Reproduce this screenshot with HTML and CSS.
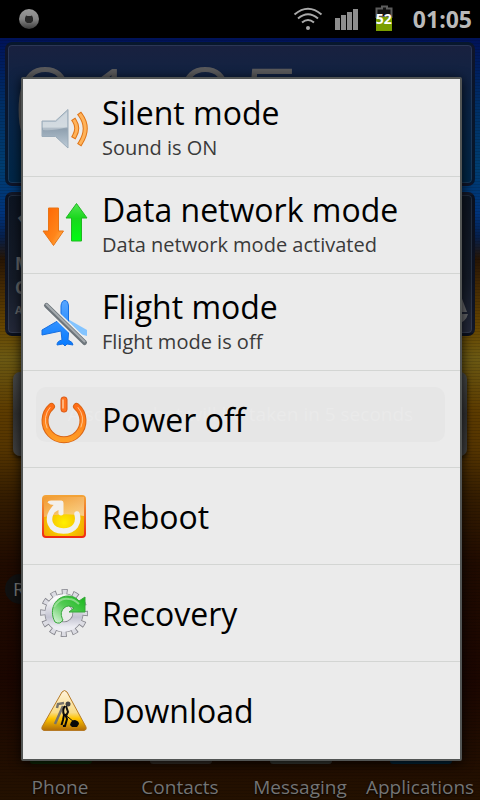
FILE: index.html
```html
<!DOCTYPE html>
<html lang="en">
<head>
<meta charset="utf-8">
<title>Power menu</title>
<link rel="stylesheet" href="styles.css">
</head>
<body>
<div class="phone">
  <header class="status">
    <svg class="status-note" width="22" height="22" viewBox="0 0 22 22" aria-hidden="true">
      <defs><linearGradient id="ball" x1="0" y1="0" x2="0" y2="1"><stop offset="0" stop-color="#999"/><stop offset=".5" stop-color="#858585"/><stop offset="1" stop-color="#3c3c3c"/></linearGradient></defs>
      <circle cx="11" cy="11" r="10" fill="url(#ball)"/>
      <path d="M8 7.500l1.500 .5h3l1.500-.5 1 2.500v3l-2 2H9l-2-2v-3z" fill="#292929"/>
    </svg>
    <div class="status-icons">
      <svg width="30" height="26" viewBox="0 0 30 26" fill="none" stroke="#aaa" stroke-width="2" aria-hidden="true">
        <path d="M1.500 8.500Q15-3 28.500 8.500M5 12.500Q15 4 25 12.500M9 16.500Q15 11.500 21 16.500"/><circle cx="15" cy="22" r="2" fill="#aaa" stroke="none"/>
      </svg>
      <svg class="signal" width="24" height="22" viewBox="0 0 24 22" fill="#8e8e8e" aria-hidden="true"><rect y="10" width="5" height="12"/><rect x="6" y="7" width="5" height="15"/><rect x="12" y="4" width="5" height="18"/><rect x="18" y="1" width="5" height="21"/></svg>
      <div class="battery">
        <svg width="18" height="26" viewBox="0 0 18 26" aria-hidden="true"><path d="M7 1.500h5v2h4.500V12H1.500V3.500H7z" fill="#111" stroke="#5c5c5c" stroke-width="2"/><path d="M1 12h16v14H1z" fill="#7a9e00"/></svg>
        <span class="battery-level">52</span>
      </div>
      <time class="clock">01:05</time>
    </div>
  </header>
  <main class="home">
    <section class="widget widget-clock"><span class="digits">01:05</span></section>
    <section class="widget widget-weather"><span class="big">12</span><span>Mon</span><span>Clear</span><span class="small">AccuWeather</span>
      <svg class="sun" width="28" height="32" viewBox="0 0 28 32" aria-hidden="true"><path d="M26 18L20 2V18zM27 20H16v10q9-2 11-10z" fill="#66686b"/></svg>
    </section>
    <div class="search"></div>
    <div class="label">Reader</div>
    <nav class="dock">
      <a href="#phone" class="app app-phone">Phone</a>
      <a href="#contacts" class="app app-contacts">Contacts</a>
      <a href="#messaging" class="app app-messaging">Messaging</a>
      <a href="#applications" class="app app-applications">Applications</a>
    </nav>
  </main>
  <div class="dialog" role="dialog" aria-label="Phone options">
    <button class="row">
      <svg class="icon" width="54" height="54" viewBox="0 0 54 54" aria-hidden="true">
        <defs><linearGradient id="steel" x1="0" y1="0" x2="0" y2="1"><stop offset="0" stop-color="#b8c5cf"/><stop offset=".45" stop-color="#c3ced6"/><stop offset=".5" stop-color="#8fa0af"/><stop offset="1" stop-color="#bdcbd7"/></linearGradient>
        <linearGradient id="orange" x1="0" y1="0" x2="0" y2="1"><stop offset="0" stop-color="#ff6d16"/><stop offset="1" stop-color="#ff9e27"/></linearGradient></defs>
        <path d="M5 19h13.500L31 7.500V46L18.500 34.500H5z" fill="url(#steel)" stroke="#9aabb9"/>
        <path d="M6 20h13L30 10V25Q17 29 6 28z" fill="#fff" opacity=".28"/>
        <g fill="none" stroke-linecap="square"><path d="M37.500 19Q42 26 37.500 34M43.500 13Q53 26 43.500 41" stroke="#df7518" stroke-width="5"/><path d="M37.500 19Q42 26 37.500 34M43.500 13Q53 26 43.500 41" stroke="#ffb35a" stroke-width="3"/></g>
      </svg>
      <span class="text"><span class="title">Silent mode</span><span class="sub">Sound is ON</span></span>
    </button>
    <button class="row">
      <svg class="icon" width="54" height="54" viewBox="0 0 54 54" aria-hidden="true">
        <defs><linearGradient id="down" x1="0" y1="0" x2="1" y2="1"><stop offset="0" stop-color="#ff6200"/><stop offset=".65" stop-color="#ff8519"/><stop offset="1" stop-color="#ffc060"/></linearGradient>
        <linearGradient id="up" x1="0" y1="0" x2="0" y2="1"><stop offset="0" stop-color="#52e652"/><stop offset=".4" stop-color="#19d71c"/><stop offset="1" stop-color="#00fc12"/></linearGradient></defs>
        <path d="M11.500 9h10v23h5L16.500 46.500 6 32h5.500z" fill="url(#down)" stroke="#e87515"/>
        <path d="M39.500 4.500L50 19h-5.500v23h-10V19H29z" fill="url(#up)" stroke="#20b722"/>
      </svg>
      <span class="text"><span class="title">Data network mode</span><span class="sub">Data network mode activated</span></span>
    </button>
    <button class="row">
      <svg class="icon" width="54" height="54" viewBox="0 0 54 54" aria-hidden="true">
        <defs><linearGradient id="sky" x1="0" y1="0" x2="0" y2="1"><stop offset="0" stop-color="#58a6ff"/><stop offset="1" stop-color="#067aff"/></linearGradient></defs>
        <path d="M29 22L50 34v6L29 34z" fill="#83c4ff"/>
        <path d="M28 4.500Q31 4.500 31.500 10V24l.5 7-1 13q5 2 5 5l-6-1-2 2-2-2-6 1q0-4 5-5L24 35 5 39v-5l19-11V10q.5-5.500 4-5.500z" fill="url(#sky)" stroke="#176fe0"/>
        <path d="M9.500 9.500L47.500 46.500" stroke="#f0f0f0" stroke-width="8"/>
        <path d="M9.500 9.500L47.500 46.500" stroke="#6d757b" stroke-width="5" stroke-linecap="round"/><path d="M9.500 8.500L47.500 45.500" stroke="#a5abaf" stroke-width="2" stroke-linecap="round"/>
      </svg>
      <span class="text"><span class="title">Flight mode</span><span class="sub">Flight mode is off</span></span>
    </button>
    <button class="row">
      <svg class="icon" width="54" height="54" viewBox="0 0 54 54" aria-hidden="true">
        <g fill="none" stroke-linecap="round"><path d="M14.500 13.500A19 19 0 1 0 39.500 13.500" stroke="#d96516" stroke-width="7"/><path d="M14.500 13.500A19 19 0 1 0 39.500 13.500" stroke="url(#orange)" stroke-width="5"/><path d="M13 14.500A19 19 0 0 0 10 35M41 14.500A19 19 0 0 1 44 34" stroke="#ffc58d"/></g>
        <rect x="24" y="4" width="6" height="15" rx="2.500" fill="#ff7421" stroke="#d95612"/><path d="M26 6.500v9" stroke="#ffb37b" stroke-width="2"/>
      </svg>
      <span class="text"><span class="title">Power off</span></span>
    </button>
    <button class="row">
      <svg class="icon" width="54" height="54" viewBox="0 0 54 54" aria-hidden="true">
        <defs><radialGradient id="box" cx=".5" cy=".65" r=".6"><stop offset="0" stop-color="#fff000"/><stop offset="1" stop-color="#f0a000"/></radialGradient><linearGradient id="gloss" x1="0" y1="0" x2="1" y2="1"><stop offset="0" stop-color="#f29a3c"/><stop offset="1" stop-color="#fbd9b0"/></linearGradient><linearGradient id="rim" x1="0" y1="0" x2="0" y2="1"><stop offset="0" stop-color="#f3a337"/><stop offset="1" stop-color="#f02b12"/></linearGradient></defs>
        <rect x="6" y="6" width="42" height="41" rx="3" fill="url(#box)" stroke="url(#rim)" stroke-width="2"/>
        <path d="M7 7h40v19Q27 22 7 27z" fill="url(#gloss)" opacity=".8"/>
        <path d="M17.500 18C8 29 13 41 26.500 41C38 41 42.500 33 40 24" fill="none" stroke="#f0f0f0" stroke-width="5.500" stroke-linecap="round"/>
        <path d="M10.500 12.500Q11 10.500 14 10.500H24.500q2 0 2 2.500V24q-2.500 3-5 0v-4L18 22l-4-3 3-4-3.500-.5z" fill="#f3f0eb"/>
      </svg>
      <span class="text"><span class="title">Reboot</span></span>
    </button>
    <button class="row">
      <svg class="icon" width="54" height="54" viewBox="0 0 54 54" aria-hidden="true">
        <defs><linearGradient id="cog" x1="0" y1="0" x2="0" y2="1"><stop offset="0" stop-color="#fafafa"/><stop offset=".65" stop-color="#c4c4d2"/><stop offset="1" stop-color="#ececf2"/></linearGradient><linearGradient id="leaf" x1="1" y1="0" x2="0" y2="1"><stop offset="0" stop-color="#15b719"/><stop offset=".5" stop-color="#53ca54"/><stop offset="1" stop-color="#e6f8e6"/></linearGradient></defs>
        <circle cx="27" cy="26" r="20" fill="none" stroke="#85858d" stroke-width="8" stroke-dasharray="5.600 4.872" stroke-dashoffset="2.800"/>
        <circle cx="27" cy="26" r="14" fill="none" stroke="#85858d" stroke-width="11"/>
        <circle cx="27" cy="26" r="20" fill="none" stroke="#dcdce3" stroke-width="6.500" stroke-dasharray="4 6.472" stroke-dashoffset="2"/>
        <circle cx="27" cy="26" r="14" fill="none" stroke="url(#cog)" stroke-width="9.500"/>
        <path d="M18 35C11 22 19 9 31 9q7 0 11 5l6-4V25H32l5-4q-6-4-10 0c-4 4-3 8-1 12q-3 5-8 2z" fill="url(#leaf)" stroke="#37a73a"/>
        <path d="M17 20Q23 10 32 12q5 0 10 5" fill="none" stroke="#a8e4a4" stroke-width="2" opacity=".7"/>
      </svg>
      <span class="text"><span class="title">Recovery</span></span>
    </button>
    <button class="row">
      <svg class="icon" width="54" height="54" viewBox="0 0 54 54" aria-hidden="true">
        <defs><linearGradient id="sign" x1="0" y1="0" x2="0" y2="1"><stop offset="0" stop-color="#fff3dc"/><stop offset=".55" stop-color="#f9dc86"/><stop offset=".7" stop-color="#ffc400"/><stop offset="1" stop-color="#b06c08"/></linearGradient></defs>
        <path d="M25 8q2.500-3 5 0L49 43q1 3-2 3.500H7Q4 46 5 43z" fill="url(#sign)" stroke="#b67a26"/>
        <path d="M27 19l-6 1-1 4M26 22L18 40" fill="none" stroke="#77736b" stroke-width="2.500"/>
        <circle cx="31" cy="20" r="2.500" fill="#444"/>
        <path d="M28 22Q25 26 27 31l-1 5-1.500 5M28 30l2 5-2 7h-2" fill="none" stroke="#080808" stroke-width="2"/><path d="M29 22l2 6-2 4" fill="none" stroke="#111" stroke-width="2"/><path d="M26 29L37 38" stroke="#111"/><path d="M33 41q1-5 5-5 4 1 4 4l-2 3h-5z" fill="#090909"/>
      </svg>
      <span class="text"><span class="title">Download</span></span>
    </button>
    <div class="toast">A screenshot will be taken in 5 seconds</div>
  </div>
</div>
</body>
</html>
```
FILE: styles.css
```css
* { box-sizing: border-box; }
body { margin: 0; background: #000; font-family: "Open Sans", "Noto Sans", sans-serif; }
.phone { position: relative; display: flex; flex-direction: column; min-height: 100vh; overflow: hidden; }
.status { display: flex; align-items: center; justify-content: space-between; height: 38px; padding: 0 8px 0 18px; background: #000; }
.status-icons { display: flex; align-items: center; gap: 12px; }
.signal { margin-right: 4px; }
.battery { position: relative; width: 18px; height: 28px; }
.battery-level { position: absolute; left: 1px; top: 5px; color: #fff; font-size: 14px; line-height: 18px; font-weight: 700; }
.clock { margin-left: 8px; color: #bababa; font-size: 23px; line-height: 32px; font-weight: 700; }

.home {
  position: relative; flex: 1; display: flex; flex-direction: column; padding: 4px 5px 0;
  background:
    repeating-linear-gradient(0deg, rgba(0,0,0,.12) 0 1px, transparent 1px 3px),
    linear-gradient(#001259 0, #002f66 9%, #003d70 17%, #00337b 23%, #06204d 26%, #261505 29%, #3f2604 32%, #674600 38%, #6b5913 42%, #5c3b00 49%, #543400 54%, #351d00 60%, #200b00 69%, #1b0600 84%, #241100 100%);
}
.widget { position: relative; display: flex; flex-direction: column; border: 3px solid rgba(10,16,30,.65); border-radius: 7px; box-shadow: inset 0 0 0 1px rgba(100,120,150,.25); }
.widget-clock { height: 144px; background: linear-gradient(#19213f, #0a2446 45%, #002748); }
.digits { padding-left: 4px; color: #5b5b5d; font-size: 116px; line-height: 124px; font-weight: 300; }
.widget-weather { height: 144px; margin-top: 6px; padding: 7px 7px 0; gap: 4px; color: #66686b; background: linear-gradient(#0d1522, #141b28 60%, #24293a); font-size: 17px; line-height: 20px; font-weight: 700; }
.big { font-size: 48px; line-height: 48px; }
.small { font-size: 11px; line-height: 16px; }
.sun { position: absolute; right: 3px; bottom: 7px; }
.search { height: 84px; margin: 36px 8px 0; border-radius: 7px; background: linear-gradient(#494a49, #333 50%, #424242); box-shadow: 0 2px 4px rgba(0,0,0,.7); }
.label { width: 90px; margin-top: 118px; padding: 0 8px; border-radius: 15px; color: #777; background: #111; font-size: 19px; line-height: 30px; }
.dock { display: grid; grid-template-columns: repeat(4, 1fr); margin: auto -5px 0; }
.app { position: relative; display: flex; justify-content: center; padding-top: 12px; color: #747474; text-decoration: none; font-size: 19px; line-height: 26px; text-shadow: 0 1px 2px #000; }
.app::before { content: ""; position: absolute; left: 30px; top: -10px; width: 62px; height: 12px; border-radius: 3px; background: #102b08; }
.app-contacts::before { background: #37302a; }
.app-messaging::before { background: #393b36; }
.app-applications::before { background: #03263b; }

.dialog { position: absolute; inset: 77px 18px 39px 21px; display: grid; grid-template-rows: repeat(7, 1fr); padding-top: 1px; border: 2px solid #525554; border-radius: 2px; background: #ebebeb; box-shadow: 0 2px 12px rgba(0,0,0,.85); }
.row { position: relative; z-index: 1; display: flex; align-items: center; gap: 11px; min-height: 0; padding: 1px 14px 0; border: 0; border-bottom: 1px solid #d3d5d3; background: transparent; color: #000; font: inherit; text-align: left; }
.row:nth-of-type(7) { border-bottom: 0; }
.icon { flex: none; }
.text { display: flex; flex-direction: column; }
.title { font-size: 32px; line-height: 38px; }
.sub { color: #3a3a3a; font-size: 20px; line-height: 32px; }
.toast { position: absolute; left: 13px; right: 15px; top: 308px; padding: 14px 24px; border-radius: 10px; background: #e6e6e6; color: #eaeaea; font-size: 19px; line-height: 27px; text-align: center; white-space: nowrap; }
```
